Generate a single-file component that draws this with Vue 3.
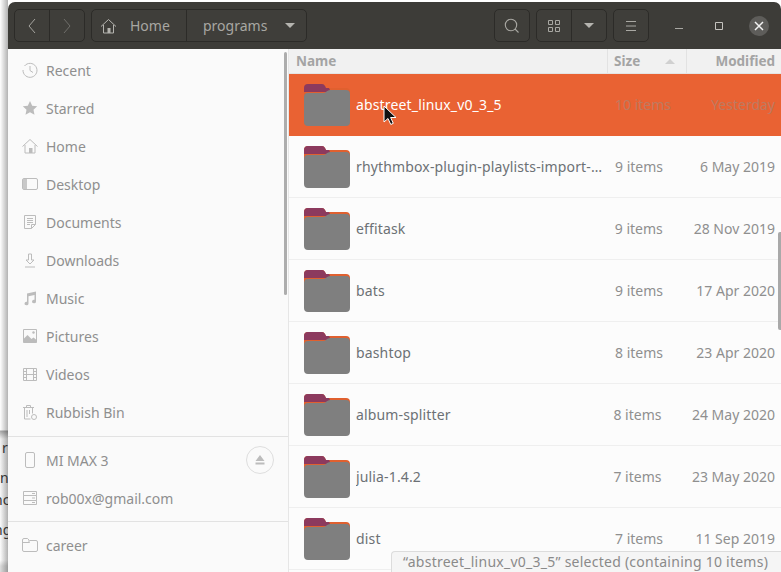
<script setup>
const places = [
  { name: "Recent", icon: "recent" },
  { name: "Starred", icon: "star" },
  { name: "Home", icon: "home" },
  { name: "Desktop", icon: "desktop" },
  { name: "Documents", icon: "docs" },
  { name: "Downloads", icon: "down" },
  { name: "Music", icon: "music" },
  { name: "Pictures", icon: "pics" },
  { name: "Videos", icon: "video" },
  { name: "Rubbish Bin", icon: "bin" },
];

const files = [
  { name: "abstreet_linux_v0_3_5", size: "10 items", date: "Yesterday", selected: true },
  { name: "rhythmbox-plugin-playlists-import-…", size: "9 items", date: "6 May 2019" },
  { name: "effitask", size: "9 items", date: "28 Nov 2019" },
  { name: "bats", size: "9 items", date: "17 Apr 2020" },
  { name: "bashtop", size: "8 items", date: "23 Apr 2020" },
  { name: "album-splitter", size: "8 items", date: "24 May 2020" },
  { name: "julia-1.4.2", size: "7 items", date: "23 May 2020" },
  { name: "dist", size: "7 items", date: "11 Sep 2019" },
];
</script>

<template>
  <div class="desktop">
    <div class="behind">
      <span class="frag f1">r</span>
      <span class="frag f2">n</span>
      <span class="frag f3">nc</span>
      <span class="frag f4">ng</span>
    </div>
    <div class="window">
      <header class="headerbar">
        <div class="group g71">
          <button class="seg">
            <svg width="10" height="16" viewBox="0 0 10 16"><path d="M8 1 2 8l6 7" fill="none" stroke="#a5a49f" stroke-width="1"/></svg>
          </button>
          <button class="seg">
            <svg width="10" height="16" viewBox="0 0 10 16"><path d="m2 1 6 7-6 7" fill="none" stroke="#6f6e6a" stroke-width="1"/></svg>
          </button>
        </div>
        <div class="group path">
          <button class="seg crumb-home">
            <svg width="17" height="16" viewBox="0 0 17 16" fill="none" stroke="#b5b4af"><path d="M1 8.500 8.500 1.500 16 8.500M3.500 7v8h10V7"/><path d="M7.500 10h3v5h-3z" fill="#b5b4af" stroke="none"/></svg>
            <span class="crumb-text">Home</span>
          </button>
          <button class="seg crumb-cur">
            <span class="crumb-text">programs</span>
            <i class="caret"></i>
          </button>
        </div>
        <div class="spacer"></div>
        <div class="group g36">
          <button class="seg">
            <svg width="16" height="16" viewBox="0 0 16 16" fill="none" stroke="#a9a8a3" stroke-width="1.100"><circle cx="7" cy="7" r="5.700"/><path d="m11 11 3.500 3.500"/></svg>
          </button>
        </div>
        <div class="group g71">
          <button class="seg">
            <svg width="14" height="14" viewBox="0 0 14 14" fill="none" stroke="#a9a8a3"><path d="M1.500 1.500h4v4h-4zM8.500 1.500h4v4h-4zM1.500 8.500h4v4h-4zM8.500 8.500h4v4h-4z"/></svg>
          </button>
          <button class="seg"><i class="caret"></i></button>
        </div>
        <div class="group g36">
          <button class="seg">
            <svg width="14" height="12" viewBox="0 0 14 12" stroke="#a9a8a3"><path d="M1 1.500h10M1 6h10M1 10.500h10" transform="translate(1 0)"/></svg>
          </button>
        </div>
        <div class="winctl">
          <svg width="12" height="12" viewBox="0 0 12 12" stroke="#a9a8a3"><path d="M2 8.500h8"/></svg>
          <svg width="12" height="12" viewBox="0 0 12 12" fill="none" stroke="#c4c3be"><path d="M2.500 2.500h7v7h-7z"/></svg>
          <span class="close">
            <svg width="10" height="10" viewBox="0 0 10 10" stroke="#f2f2f2" stroke-width="1.500"><path d="m1 1 8 8M9 1 1 9"/></svg>
          </span>
        </div>
      </header>

      <div class="body">
        <aside class="sidebar">
          <div class="sb-scroll"></div>
          <ul class="places">
            <li v-for="p in places" :key="p.name" class="place">
              <span class="picon">
                <svg width="16" height="16" viewBox="0 0 16 16" fill="none" stroke="#bcbcbc" stroke-width="1">
                  <template v-if="p.icon === 'recent'"><path d="M2.500 4A7 7 0 1 1 1 8" /><path d="M8 4v4.500l3 2"/></template>
                  <path v-else-if="p.icon === 'star'" d="m8 1 2.200 4.700 5 .6-3.700 3.400 1 5L8 12.300l-4.500 2.400 1-5L.8 6.300l5-.6z" fill="#bcbcbc" stroke="none"/>
                  <template v-else-if="p.icon === 'home'"><path d="M.5 8.500 8 1.500l7.500 7M3 7v8h10V7"/><path d="M7 10h3.500v5H7z" fill="#bcbcbc" stroke="none"/></template>
                  <template v-else-if="p.icon === 'desktop'"><rect x=".5" y="2.500" width="15" height="11" rx="1.500"/><path d="M1 3h4v10H1z" fill="#c8c8c8" stroke="none"/></template>
                  <template v-else-if="p.icon === 'docs'"><path d="M2.500 1.500h11v9l-4 4h-7z"/><path d="M5 4.500h6M5 6.500h6M5 8.500h6M5 10.500h3M9.500 14.500v-4h4"/></template>
                  <path v-else-if="p.icon === 'down'" d="M6.500 2h3v6H12L8 12 4 8h2.500zM3 15h10"/>
                  <path v-else-if="p.icon === 'music'" d="M5 3.500 14 1.500V11.500a2 1.800 0 1 1-1.500-1.700V5L6.500 6.300V13.500a2 1.800 0 1 1-1.500-1.700z" fill="#bcbcbc" stroke="none"/>
                  <template v-else-if="p.icon === 'pics'"><path d="M1.500 1.500h13v13h-13z"/><path d="M1.500 14.500V11l4-4 4 4 2-1.500 3 2.500v2.500z" fill="#bcbcbc" stroke="none"/><circle cx="11.500" cy="4.500" r="1.200" fill="#bcbcbc" stroke="none"/></template>
                  <template v-else-if="p.icon === 'video'"><path d="M1.500 2.500h13v12h-13zM4.500 2.500v12M11.500 2.500v12M4.500 8.500h7M1.500 5.500h3M1.500 8.500h3M1.500 11.500h3M11.500 5.500h3M11.500 8.500h3M11.500 11.500h3"/></template>
                  <template v-else-if="p.icon === 'bin'"><path d="M1 3.500h11M4.500 3.500V1.500h4v2M2.500 3.500v11.500h6M10.500 3.500v6M5 6v7M7.500 6v4"/><circle cx="12" cy="13" r="2.500"/></template>
                </svg>
              </span>
              <span>{{ p.name }}</span>
            </li>
          </ul>
          <div class="sep first"></div>
          <div class="place device">
            <span class="picon">
              <svg width="16" height="16" viewBox="0 0 16 16" fill="none" stroke="#bcbcbc"><rect x="3.500" y=".5" width="9" height="15" rx="1.500"/></svg>
            </span>
            <span>MI MAX 3</span>
            <span class="eject">
              <svg width="10" height="10" viewBox="0 0 10 10" fill="#bcbcbc"><path d="M5 0 9.500 6h-9zM.5 7.500h9V9.500h-9z"/></svg>
            </span>
          </div>
          <div class="place">
            <span class="picon">
              <svg width="16" height="16" viewBox="0 0 16 16" fill="none" stroke="#bcbcbc"><path d="M1.500 1.500h13v4h-13zM1.500 5.500h13v5h-13zM1.500 10.500h13v4h-13zM10 3.500h3M10 8h3M10 12.500h3"/></svg>
            </span>
            <span>rob00x@gmail.com</span>
          </div>
          <div class="sep"></div>
          <div class="place">
            <span class="picon">
              <svg width="16" height="16" viewBox="0 0 16 16" fill="none" stroke="#bcbcbc"><path d="M.5 13V3q0-1.500 1.500-1.500h3.500l2 2h6.500q1.500 0 1.500 1.500v8q0 1.500-1.500 1.500H2Q.5 14.500.5 13zM.5 5.500h7l-1-2"/></svg>
            </span>
            <span>career</span>
          </div>
        </aside>

        <main class="files">
          <div class="cols">
            <div class="col c-name">Name</div>
            <div class="col c-size">Size<i class="sort"></i></div>
            <div class="col c-date">Modified</div>
          </div>
          <div class="main-scroll"></div>
          <div v-for="f in files" :key="f.name" class="row" :class="{ selected: f.selected }">
            <svg class="folder" width="46" height="44" viewBox="0 0 46 44">
              <path d="M0 12V6q0-4 4-4h14q2 0 3 2l1 2h20q4 0 4 4v8H0z" fill="#e0602f"/>
              <path d="M0 12V6q0-4 4-4h14q2 0 3 2l1 2h3l2 4H0z" fill="#8c3a5e"/>
              <path d="M0 15q0-4 4-4h15q2 0 3.500-1.500Q24 8 26 8h16q4 0 4 4v28q0 4-4 4H4q-4 0-4-4z" fill="#7f7f7f"/>
            </svg>
            <span class="fname">{{ f.name }}</span>
            <span class="fsize">{{ f.size }}</span>
            <span class="fdate">{{ f.date }}</span>
          </div>
          <div class="status">“abstreet_linux_v0_3_5” selected  (containing 10 items)</div>
          <svg class="cursor" width="14" height="22" viewBox="0 0 14 22">
            <path d="M1 1v16l4-3.500 2.800 6 2.500-1.200-2.700-5.800H13z" fill="#111" stroke="#fff" stroke-width="1"/>
          </svg>
        </main>
      </div>
    </div>
  </div>
</template>

<style scoped>
.desktop {
  display: flex;
  width: 781px;
  height: 572px;
  overflow: hidden;
  background: #fff;
  font-family: "Noto Sans", sans-serif;
}

.behind {
  position: relative;
  width: 8px;
  flex: none;
  overflow: hidden;
  background:
    linear-gradient(to right, rgba(0, 0, 0, 0), rgba(0, 0, 0, 0.3)),
    linear-gradient(to bottom, #fff 430px, #aaa 431px, #f4f4f4 439px, #fff 560px, #ddd 566px);
}

.frag {
  position: absolute;
  font-size: 14px;
  color: #333;
}
.f1 { top: 438px; left: 2px; }
.f2 { top: 468px; left: 0; }
.f3 { top: 490px; left: -6px; }
.f4 { top: 520px; left: -6px; }

.window {
  flex: 1;
  margin-top: 2px;
  display: flex;
  flex-direction: column;
  min-width: 0;
}

.headerbar {
  height: 47px;
  flex: none;
  display: flex;
  align-items: center;
  gap: 6px;
  padding-left: 6px;
  background: #3d3c38;
  border-radius: 7px 7px 0 0;
}

.group {
  display: flex;
  height: 33px;
  border: 1px solid #2c2b28;
  border-radius: 5px;
  background: #3f3e3a;
  box-sizing: border-box;
}
.g71 { width: 71px; }
.g36 { width: 36px; }
.path { width: 216px; }

.seg {
  flex: 1;
  display: flex;
  align-items: center;
  justify-content: center;
  height: 100%;
  padding: 0;
  background: none;
  border: 0;
  border-right: 1px solid #2c2b28;
  font: inherit;
}
.seg:last-child { border-right: 0; }

.crumb-home {
  flex: none;
  width: 95px;
  justify-content: flex-start;
  padding-left: 8px;
  gap: 13px;
}
.crumb-cur {
  justify-content: flex-start;
  padding-left: 16px;
  gap: 18px;
}
.crumb-text {
  font-size: 14px;
  color: #a8a7a2;
}

.caret {
  width: 0;
  height: 0;
  border-left: 5px solid transparent;
  border-right: 5px solid transparent;
  border-top: 5px solid #b5b4af;
}

.spacer { flex: 1; }

.winctl {
  display: flex;
  align-items: center;
  margin-left: 18px;
  gap: 28px;
  padding-right: 12px;
}

.close {
  display: flex;
  align-items: center;
  justify-content: center;
  width: 20px;
  height: 20px;
  margin-left: -4px;
  border-radius: 50%;
  background: #5e5d5a;
}

.body {
  flex: 1;
  display: flex;
  min-height: 0;
}

.sidebar {
  position: relative;
  width: 281px;
  flex: none;
  box-sizing: border-box;
  background: #fafafa;
  border-right: 1px solid #e6e6e6;
  font-size: 14px;
  color: #8f8f8f;
}

.sb-scroll {
  position: absolute;
  right: 1px;
  top: 3px;
  width: 3px;
  height: 243px;
  border-radius: 2px;
  background: #adadad;
}

.places {
  list-style: none;
  margin: 0;
  padding: 2px 0 0;
}

.place {
  display: flex;
  align-items: center;
  height: 38px;
  padding-left: 14px;
  gap: 8px;
}
.picon {
  display: flex;
  width: 16px;
}
.device { position: relative; }
.eject {
  position: absolute;
  left: 238px;
  top: 5px;
  display: flex;
  align-items: center;
  justify-content: center;
  width: 28px;
  height: 28px;
  box-sizing: border-box;
  border: 1px solid #dedede;
  border-radius: 50%;
}

.sep {
  height: 1px;
  background: #e2e2e2;
  margin: 4px 0;
}
.sep.first { margin-top: 5px; }

.files {
  position: relative;
  flex: 1;
  min-width: 0;
  overflow: hidden;
  background: #fcfcfc;
  font-size: 14px;
  color: #8f8f8f;
}

.cols {
  display: flex;
  height: 25px;
  background: #f1f1f1;
  font-weight: 700;
  font-size: 13.500px;
  color: #a4a4a4;
  border-bottom: 1px solid #e4e4e4;
  box-sizing: border-box;
}
.col {
  display: flex;
  align-items: center;
  box-sizing: border-box;
  border-right: 1px solid #e2e2e2;
}
.c-name { width: 319px; padding-left: 7px; }
.c-size { width: 79px; padding-left: 6px; }
.c-date {
  flex: 1;
  justify-content: flex-end;
  padding-right: 6px;
  border-right: 0;
}
.sort {
  margin-left: 25px;
  width: 0;
  height: 0;
  border-left: 5px solid transparent;
  border-right: 5px solid transparent;
  border-bottom: 5px solid #d0d0d0;
}

.main-scroll {
  position: absolute;
  right: 0;
  top: 183px;
  width: 3px;
  height: 98px;
  background: #a9a9a9;
  border-radius: 2px 0 0 2px;
}

.row {
  display: flex;
  align-items: center;
  height: 62px;
  padding-bottom: 1px;
  box-sizing: border-box;
  border-bottom: 1px solid #efefef;
}
.row.selected {
  padding-bottom: 2px;
  background: #e96233;
  border-bottom: 0;
}
.folder {
  flex: none;
  margin-left: 15px;
}
.fname {
  width: 259px;
  margin-left: 6px;
  letter-spacing: 0.15px;
  white-space: pre;
  overflow: hidden;
  color: #6c7175;
}
.fsize { width: 79px; }
.fdate {
  flex: 1;
  text-align: right;
  padding-right: 6px;
  white-space: nowrap;
}
.selected .fname { color: #fff; }
.selected .fsize,
.selected .fdate { color: #bd7a60; }

.status {
  position: absolute;
  right: 0;
  bottom: 0;
  width: 390px;
  height: 21px;
  box-sizing: border-box;
  padding-left: 11px;
  line-height: 20px;
  letter-spacing: 0.25px;
  white-space: pre;
  color: #8a8a8a;
  background: #f5f5f5;
  border: 1px solid #dcdcdc;
  border-width: 1px 0 0 1px;
  border-radius: 4px 0 0 0;
}

.cursor {
  position: absolute;
  left: 94px;
  top: 56px;
}
</style>
